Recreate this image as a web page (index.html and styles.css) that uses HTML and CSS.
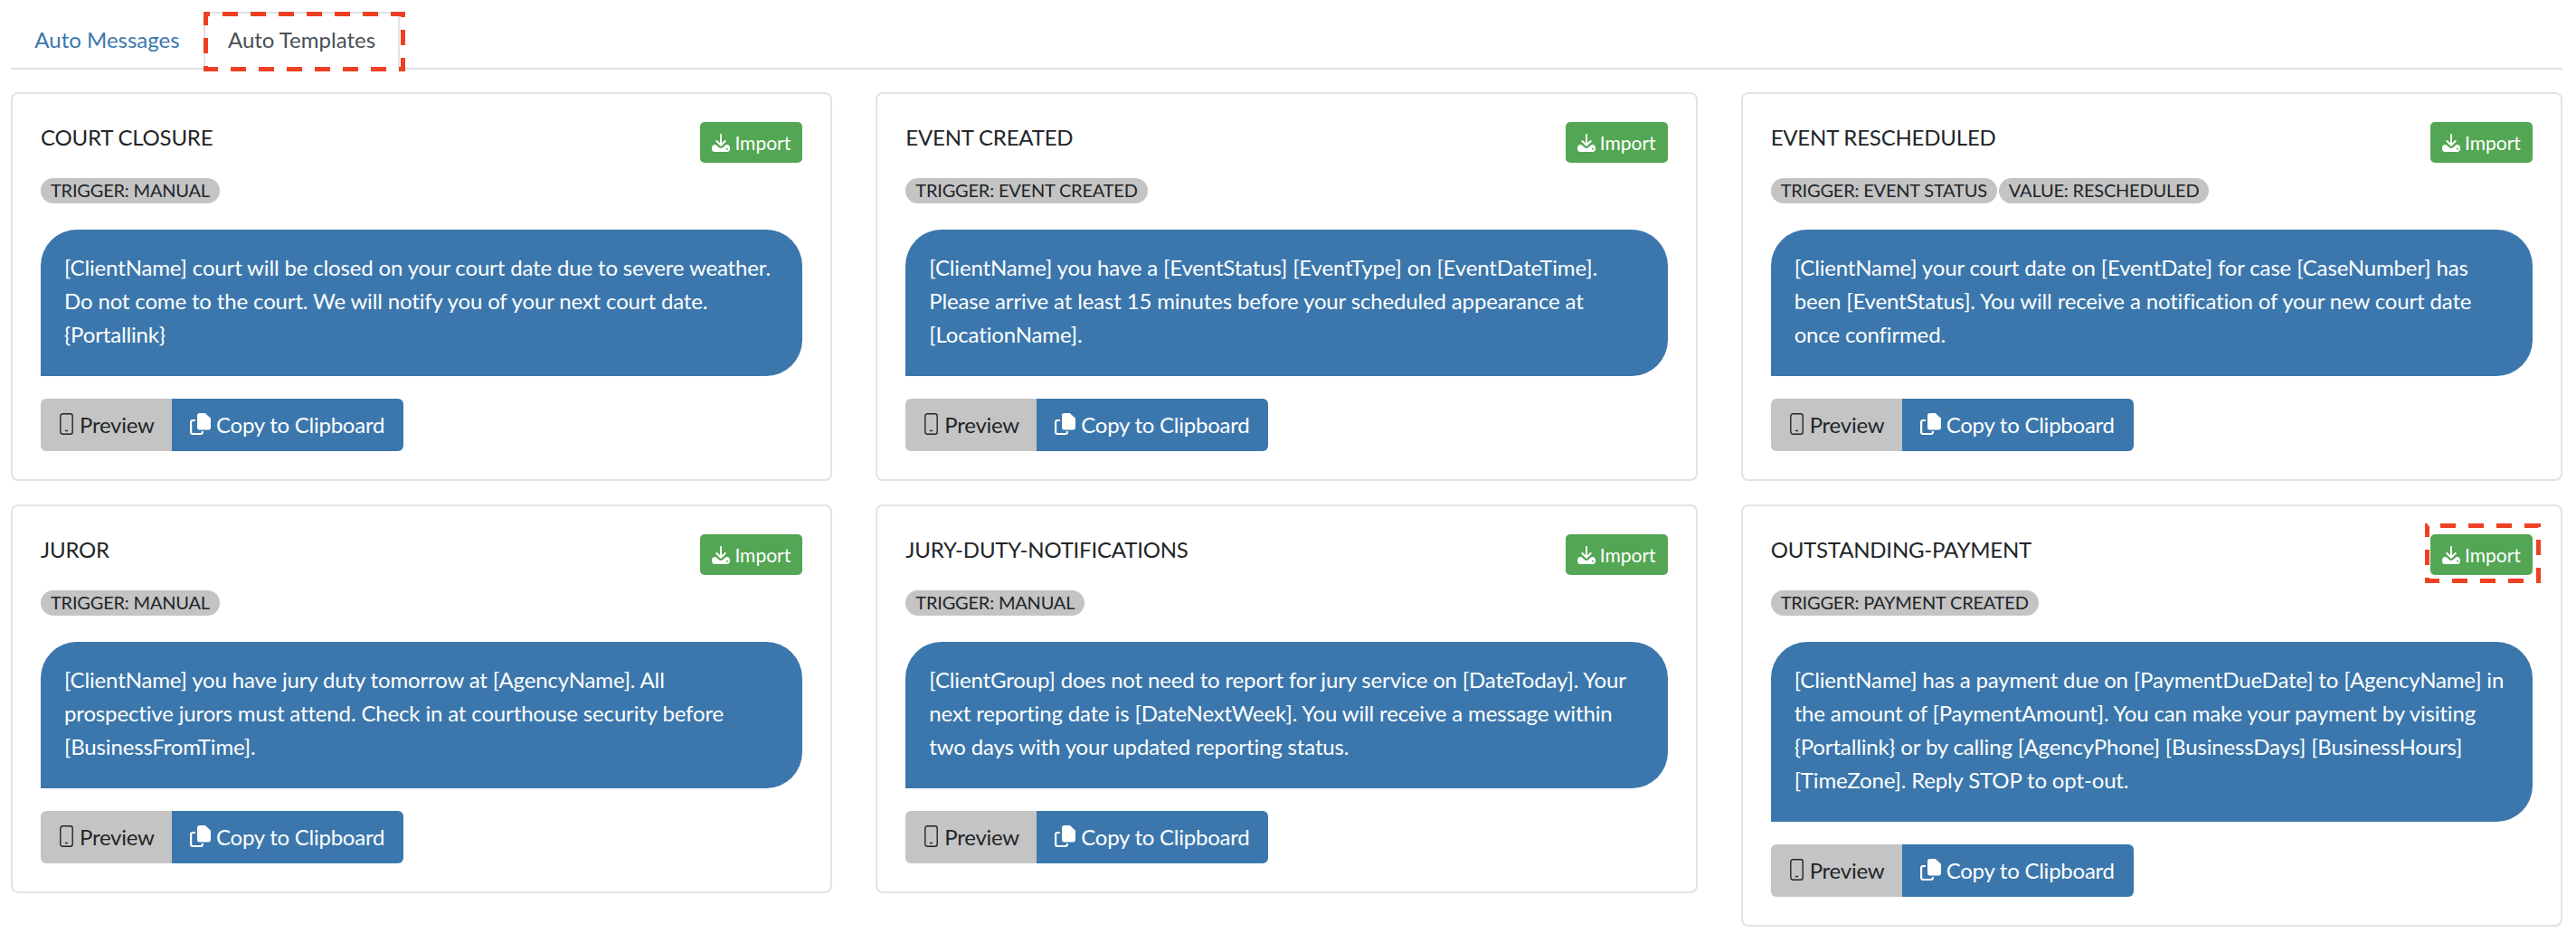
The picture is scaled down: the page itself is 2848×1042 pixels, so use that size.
FILE: index.html
```html
<!DOCTYPE html>
<html lang="en">
<head>
<meta charset="utf-8">
<title>Auto Templates</title>
<link rel="stylesheet" href="styles.css">
</head>
<body>
<svg class="sprite" width="0" height="0" aria-hidden="true">
  <symbol id="i-import" viewBox="0 0 20 20">
    <path d="M10 1v11.500M5.300 8l4.700 4.700L14.700 8" fill="none" stroke="currentColor" stroke-width="2" stroke-linecap="round" stroke-linejoin="round"/>
    <path d="M0 16c0-2.500 1.300-4 3.300-4h1l3.700 3.300c1.100 1 2.900 1 4 0L15.700 12h1c2 0 3.300 1.500 3.300 4v.7c0 1.800-1.300 3.300-3 3.300H3c-1.700 0-3-1.500-3-3.300z" fill="currentColor"/>
    <circle cx="17" cy="16.800" r="1" fill="#53a653"/>
  </symbol>
  <symbol id="i-phone" viewBox="0 0 15 24">
    <rect x=".8" y=".8" width="13.400" height="22.400" rx="2.500" fill="none" stroke="currentColor" stroke-width="1.400"/>
    <path d="M6 19.500h3" stroke="currentColor" stroke-width="1.400"/>
  </symbol>
  <symbol id="i-copy" viewBox="0 0 23 24">
    <path d="M10.500 0h6.300L23 5.700v10.300c0 1.400-1.100 2.500-2.500 2.500h-10c-1.400 0-2.500-1.100-2.500-2.500V2.500C8 1.100 9.100 0 10.500 0z" fill="currentColor"/>
    <path d="M6 8H3.200C2 8 1.100 8.900 1.100 10.100v10.800c0 1.200.9 2.100 2.100 2.100h8.600c1.200 0 2.100-.9 2.100-2.100V20" fill="none" stroke="currentColor" stroke-width="2.200"/>
  </symbol>
</svg>

<div class="page">
  <nav class="tabs">
    <a class="tab tab-first">Auto Messages</a>
    <a class="tab tab-active">Auto Templates</a>
  </nav>
  <div class="grid">
    <article class="card">
      <header class="card-head"><h2 class="card-title">COURT CLOSURE</h2><button class="import"><svg class="ic-import"><use href="#i-import"/></svg>Import</button></header>
      <div class="badges"><span class="badge">TRIGGER: MANUAL</span></div>
      <p class="bubble">[ClientName] court will be closed on your court date due to severe weather.<br>Do not come to the court. We will notify you of your next court date.<br>{Portallink}</p>
      <div class="actions"><button class="btn btn-preview"><svg class="ic-phone"><use href="#i-phone"/></svg>Preview</button><button class="btn btn-copy"><svg class="ic-copy"><use href="#i-copy"/></svg>Copy to Clipboard</button></div>
    </article>
    <article class="card">
      <header class="card-head"><h2 class="card-title">EVENT CREATED</h2><button class="import"><svg class="ic-import"><use href="#i-import"/></svg>Import</button></header>
      <div class="badges"><span class="badge">TRIGGER: EVENT CREATED</span></div>
      <p class="bubble">[ClientName] you have a [EventStatus] [EventType] on [EventDateTime].<br>Please arrive at least 15 minutes before your scheduled appearance at<br>[LocationName].</p>
      <div class="actions"><button class="btn btn-preview"><svg class="ic-phone"><use href="#i-phone"/></svg>Preview</button><button class="btn btn-copy"><svg class="ic-copy"><use href="#i-copy"/></svg>Copy to Clipboard</button></div>
    </article>
    <article class="card">
      <header class="card-head"><h2 class="card-title">EVENT RESCHEDULED</h2><button class="import"><svg class="ic-import"><use href="#i-import"/></svg>Import</button></header>
      <div class="badges"><span class="badge">TRIGGER: EVENT STATUS</span><span class="badge">VALUE: RESCHEDULED</span></div>
      <p class="bubble">[ClientName] your court date on [EventDate] for case [CaseNumber] has<br>been [EventStatus]. You will receive a notification of your new court date<br>once confirmed.</p>
      <div class="actions"><button class="btn btn-preview"><svg class="ic-phone"><use href="#i-phone"/></svg>Preview</button><button class="btn btn-copy"><svg class="ic-copy"><use href="#i-copy"/></svg>Copy to Clipboard</button></div>
    </article>
    <article class="card">
      <header class="card-head"><h2 class="card-title">JUROR</h2><button class="import"><svg class="ic-import"><use href="#i-import"/></svg>Import</button></header>
      <div class="badges"><span class="badge">TRIGGER: MANUAL</span></div>
      <p class="bubble">[ClientName] you have jury duty tomorrow at [AgencyName]. All<br>prospective jurors must attend. Check in at courthouse security before<br>[BusinessFromTime].</p>
      <div class="actions"><button class="btn btn-preview"><svg class="ic-phone"><use href="#i-phone"/></svg>Preview</button><button class="btn btn-copy"><svg class="ic-copy"><use href="#i-copy"/></svg>Copy to Clipboard</button></div>
    </article>
    <article class="card">
      <header class="card-head"><h2 class="card-title">JURY-DUTY-NOTIFICATIONS</h2><button class="import"><svg class="ic-import"><use href="#i-import"/></svg>Import</button></header>
      <div class="badges"><span class="badge">TRIGGER: MANUAL</span></div>
      <p class="bubble">[ClientGroup] does not need to report for jury service on [DateToday]. Your<br>next reporting date is [DateNextWeek]. You will receive a message within<br>two days with your updated reporting status.</p>
      <div class="actions"><button class="btn btn-preview"><svg class="ic-phone"><use href="#i-phone"/></svg>Preview</button><button class="btn btn-copy"><svg class="ic-copy"><use href="#i-copy"/></svg>Copy to Clipboard</button></div>
    </article>
    <article class="card">
      <header class="card-head"><h2 class="card-title">OUTSTANDING-PAYMENT</h2><button class="import"><svg class="ic-import"><use href="#i-import"/></svg>Import</button></header>
      <div class="badges"><span class="badge">TRIGGER: PAYMENT CREATED</span></div>
      <p class="bubble">[ClientName] has a payment due on [PaymentDueDate] to [AgencyName] in<br>the amount of [PaymentAmount]. You can make your payment by visiting<br>{Portallink} or by calling [AgencyPhone] [BusinessDays] [BusinessHours]<br>[TimeZone]. Reply STOP to opt-out.</p>
      <div class="actions"><button class="btn btn-preview"><svg class="ic-phone"><use href="#i-phone"/></svg>Preview</button><button class="btn btn-copy"><svg class="ic-copy"><use href="#i-copy"/></svg>Copy to Clipboard</button></div>
    </article>
  </div>
</div>
<svg class="mark mark-tab" width="223" height="66" aria-hidden="true"><rect class="mark-line" x="2.5" y="2.5" width="218" height="61" stroke-dashoffset="12.5"/></svg>
<svg class="mark mark-import" width="128" height="66" aria-hidden="true"><rect class="mark-line" x="2.5" y="2.5" width="123" height="61" stroke-dashoffset="16.5"/></svg>
</body>
</html>
```
FILE: styles.css
```css
* { box-sizing: border-box; }
html, body { margin: 0; padding: 0; background: #fff; }
body {
  font-family: "Lato", "Noto Sans", sans-serif;
  font-size: 24px;
  color: #212529;
  position: relative;
  height: 1042px;
  overflow: hidden;
}
.sprite { position: absolute; }
.page { padding: 13px 15px 0 12px; }
.tabs {
  display: flex;
  height: 64px;
  border-bottom: 2px solid #dee2e6;
}
.tab {
  display: flex;
  align-items: center;
  justify-content: center;
  height: 64px;
  padding-bottom: 4px;
  color: #3b77ac;
  white-space: nowrap;
  border: 2px solid transparent;
  border-radius: 6px 6px 0 0;
}
.tab-first { width: 213px; }
.tab-active {
  width: 217px;
  color: #495057;
  border-color: #dee2e6 #dee2e6 #fff;
  background: #fff;
}
.grid {
  display: grid;
  grid-template-columns: repeat(3, 1fr);
  column-gap: 48px;
  row-gap: 26px;
  align-items: start;
  margin-top: 25px;
}
.card {
  border: 2px solid #e3e3e3;
  border-radius: 8px;
  padding: 31px;
}
.card-head { display: flex; justify-content: space-between; align-items: flex-start; height: 45px; }
.card-title { margin: 0; font-size: 24px; font-weight: 400; line-height: 34px; letter-spacing: -.2px; color: #212529; }
.import {
  display: flex;
  align-items: center;
  justify-content: center;
  width: 113px;
  height: 45px;
  padding: 0;
  font: inherit;
  font-size: 21px;
  color: #fff;
  background: #53a653;
  border: 0;
  border-radius: 5px;
}
.ic-import { width: 20px; height: 20px; margin-right: 5px; flex: none; }
.badges { display: flex; gap: 2px; margin-top: 17px; }
.badge {
  display: block;
  height: 28px;
  line-height: 27px;
  padding: 0 11px;
  font-size: 20px;
  letter-spacing: -.2px;
  border-radius: 14px;
  background: #c4c4c4;
  color: #212529;
}
.bubble {
  margin: 29px 0 0;
  padding: 23px 26px 28px;
  line-height: 37px;
  font-size: 24px;
  letter-spacing: -.15px;
  white-space: nowrap;
  color: #fff;
  background: #3b77ac;
  border-radius: 40px 40px 40px 0;
}
.actions { display: flex; margin-top: 25px; }
.btn {
  display: flex;
  align-items: center;
  height: 58px;
  padding: 0 0 2px 21px;
  font: inherit;
  font-size: 24px;
  letter-spacing: -.25px;
  white-space: nowrap;
  border: 0;
}
.btn-preview { width: 145px; background: #c4c4c4; color: #212529; border-radius: 6px 0 0 6px; }
.btn-copy { width: 256px; padding-left: 20px; background: #3b77ac; color: #fff; border-radius: 0 6px 6px 0; }
.ic-phone { width: 15px; height: 24px; margin-right: 7px; flex: none; }
.ic-copy { width: 23px; height: 24px; margin-right: 6px; flex: none; }
.mark { position: absolute; }
.mark-line { fill: none; stroke: #ee4023; stroke-width: 5; stroke-dasharray: 17 14; }
.mark-tab { left: 225px; top: 13px; }
.mark-import { left: 2681px; top: 579px; }
```
